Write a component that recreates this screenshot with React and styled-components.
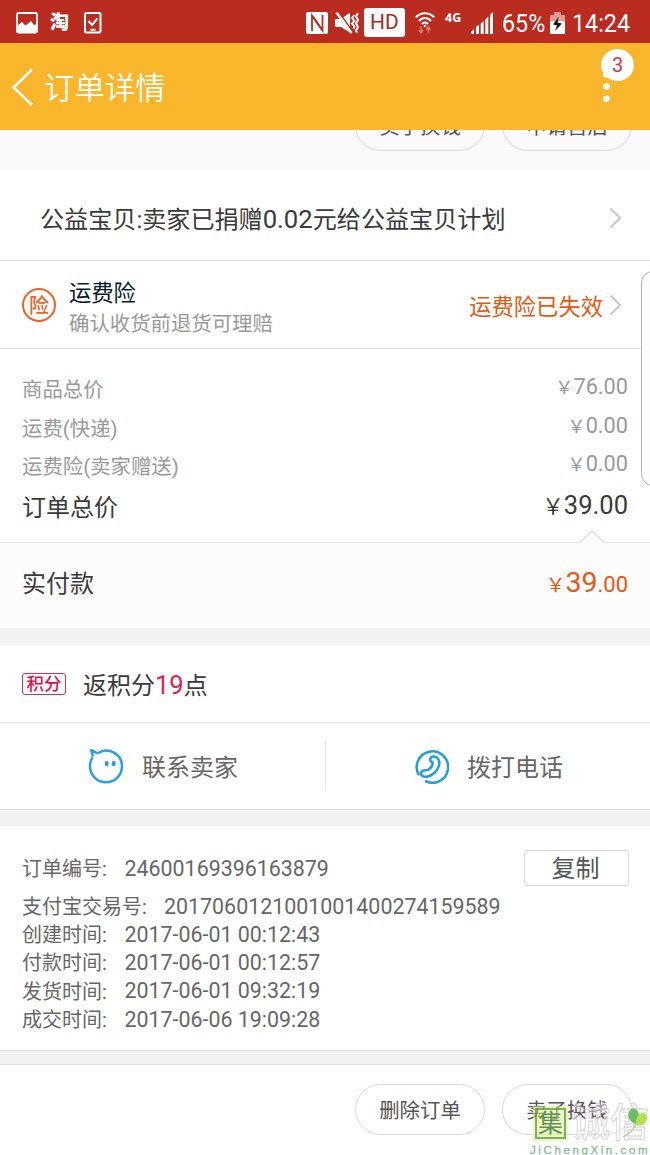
import React from 'react'
import styled, { createGlobalStyle } from 'styled-components'

const GlobalStyle = createGlobalStyle`
    * {
        box-sizing: border-box;
    }
    body {
        margin: 0;
        background: #fff;
        font-family: Roboto, 'Noto Sans CJK SC', sans-serif;
        color: #3a3a3a;
    }
`

const Page = styled.div`
    position: relative;
    width: 650px;
    height: 1155px;
    overflow: hidden;
    display: flex;
    flex-direction: column;
    white-space: nowrap;
`

const StatusBar = styled.div`
    height: 43px;
    flex: none;
    display: flex;
    align-items: center;
    justify-content: space-between;
    padding: 2px 16px 0 16px;
    background: #ba2c1f;
    color: #fff;
`

const StatusGroup = styled.div`
    display: flex;
    align-items: center;
`

const StatusIcon = styled.svg`
    display: block;
    flex: none;
    margin-right: ${({ $gap }) => $gap || 0}px;
`

const TaoMark = styled.div`
    width: 20px;
    margin-right: 14px;
    font-size: 19px;
    line-height: 22px;
    font-weight: 900;
`

const HdTag = styled.div`
    width: 41px;
    height: 29px;
    margin-right: 10px;
    border-radius: 3px;
    background: #fff;
    color: #a82b20;
    font-size: 21px;
    line-height: 29px;
    text-align: center;
`

const NetworkType = styled.div`
    width: 18px;
    height: 24px;
    margin-right: 8px;
    font: bold 12.5px/14px 'Open Sans', sans-serif;
`

const StatusText = styled.div`
    width: ${({ $width }) => $width}px;
    margin-right: ${({ $gap }) => $gap || 0}px;
    font-size: 26.5px;
    line-height: 30px;
    transform: scaleX(0.88);
    transform-origin: left;
`

const Header = styled.div`
    position: relative;
    height: 87px;
    flex: none;
    display: flex;
    align-items: center;
    padding: 1px 0 0 11px;
    background: #f8b62d;
    color: #fff;
`

const Title = styled.div`
    margin-left: 10px;
    padding-top: 4px;
    font-size: 30.4px;
    line-height: 40px;
    font-weight: 350;
`

const MoreDots = styled.svg`
    position: absolute;
    left: 600px;
    top: 26px;
`

const Badge = styled.div`
    position: absolute;
    left: 601px;
    top: 6px;
    width: 33px;
    height: 32px;
    border-radius: 50%;
    background: #fff;
    color: #cc3a36;
    font-size: 20px;
    line-height: 33px;
    text-align: center;
`

const ActionStrip = styled.div`
    height: 40px;
    flex: none;
    overflow: hidden;
    display: flex;
    justify-content: flex-end;
    align-items: flex-end;
    gap: 17px;
    padding: 0 18px 19px 0;
    background: #fafafa;
`

const PillButton = styled.button`
    flex: none;
    width: 130px;
    height: 51px;
    padding: 3px 0 0;
    border: 1px solid #d9d9d9;
    border-radius: 26px;
    background: transparent;
    font-family: inherit;
    font-size: 20.4px;
    line-height: 46px;
    color: #555;
`

const Row = styled.div`
    height: ${({ $height }) => $height}px;
    flex: none;
    display: flex;
    align-items: center;
    border-bottom: 1px solid #e2e2e2;
    padding: ${({ $top }) => $top || 0}px 28px 0 ${({ $left }) => $left || 22}px;
`

// digits are set a little larger than the Chinese text beside them
const Digits = styled.span`
    font-size: 1.065em;
`

const CharityText = styled.div`
    flex: 1;
    padding-top: 2px;
    font-size: 24.1px;
    line-height: 32px;
`

const InsuranceIcon = styled.div`
    width: 34px;
    height: 34px;
    margin-right: 13px;
    border: 2px solid #e8652b;
    border-radius: 50%;
    color: #e8652b;
    font-size: 20px;
    line-height: 32px;
    font-weight: 500;
    text-align: center;
`

const InsuranceText = styled.div`
    flex: 1;
    padding-top: 8px;
`

const InsuranceName = styled.div`
    font-size: 22.3px;
    line-height: 31px;
    color: #051b28;
`

const InsuranceNote = styled.div`
    font-size: 20.4px;
    line-height: 31px;
    color: #999;
`

const InsuranceState = styled.div`
    margin-right: 6px;
    padding-top: 4px;
    font-size: 22.3px;
    line-height: 32px;
    color: #e8570f;
`

const Prices = styled.div`
    position: relative;
    height: 194px;
    flex: none;
    padding: 21px 22px 0;
    border-bottom: 1px solid #e2e2e2;
`

const PriceLine = styled.div`
    display: flex;
    justify-content: space-between;
    height: ${({ $total }) => ($total ? 44 : 38.5)}px;
    line-height: ${({ $total }) => ($total ? 44 : 40)}px;
    font-size: ${({ $total }) => ($total ? 24 : 20.4)}px;
    color: ${({ $total }) => ($total ? '#3a3a3a' : '#999')};
`

const Amount = styled.div`
    margin-top: -3px;
`

const YuanSign = styled.span`
    font-size: 0.9em;
`

const Notch = styled.svg`
    position: absolute;
    left: 579px;
    bottom: -2px;
`

const Paid = styled.div`
    height: 85px;
    flex: none;
    display: flex;
    justify-content: space-between;
    align-items: center;
    padding: 0 22px 8px;
    background: #fcfcfc;
    font-size: 24px;
`

const PaidAmount = styled.div`
    display: flex;
    align-items: baseline;
    padding-top: 2px;
    font-size: 22px;
    color: #e8570f;
`

const PaidYuan = styled.span`
    font-size: 28.5px;
`

const Gap = styled.div`
    height: ${({ $height }) => $height}px;
    flex: none;
    background: #f2f2f2;
`

const PointsTag = styled.div`
    width: 44px;
    height: 22px;
    margin-right: 17px;
    border: 1px solid #d92a5c;
    border-radius: 3px;
    color: #d9114a;
    font-size: 17.5px;
    line-height: 21px;
    font-weight: 500;
    text-align: center;
`

const PointsText = styled.div`
    font-size: 24px;
    line-height: 32px;
    padding-top: 4px;
`

const PointsValue = styled(Digits)`
    color: #e0214f;
`

const Contacts = styled.div`
    height: 87px;
    flex: none;
    display: flex;
    align-items: center;
    border-bottom: 1px solid #e2e2e2;
`

const Contact = styled.div`
    flex: 1;
    height: 50px;
    display: flex;
    align-items: center;
    padding: 0 0 2px 88px;
    font-size: 24px;
    color: #666;

    & + & {
        border-left: 1px solid #e6e6e6;
        padding-left: 87px;
    }
`

const ContactIcon = styled.svg`
    position: relative;
    top: 1px;
    margin-right: 18px;
`

const OrderInfo = styled.div`
    height: 225px;
    flex: none;
    padding: 23px 22px 0;
    border-bottom: 1px solid #dcdcdc;
    color: #666;
`

const InfoLine = styled.div`
    display: flex;
    align-items: center;
    height: ${({ $height }) => $height || 28.3}px;
    margin-bottom: ${({ $gap }) => $gap || 0}px;
    font-size: 20px;
`

const InfoLabel = styled.div`
    width: ${({ $wide }) => ($wide ? 142 : 102.5)}px;
    padding-bottom: 1px;
`

const InfoValue = styled.div`
    flex: 1;
    font-size: 21.4px;
`

const CopyButton = styled.button`
    width: 105px;
    height: 36px;
    margin-right: -1px;
    padding: 2px 2px 0 0;
    border: 1px solid #d9d9d9;
    border-radius: 3px;
    background: #fff;
    font-family: inherit;
    font-size: 24px;
    line-height: 32px;
    color: #555;
`

const Footer = styled.div`
    flex: 1;
    display: flex;
    justify-content: flex-end;
    gap: 17px;
    padding: 19px 18px 0 0;
    border-top: 1px solid #e2e2e2;
`

const EdgePanel = styled.div`
    position: absolute;
    left: 641px;
    top: 271px;
    width: 24px;
    height: 215px;
    border: 1px solid #b0b0b0;
    border-radius: 12px;
    background: #fcfcfc;
`

const Watermark = styled.div`
    position: absolute;
    left: 530px;
    top: 1105px;
    width: 120px;
`

const WatermarkTop = styled.div`
    display: flex;
    align-items: center;
    height: 36px;
    padding-left: 5px;
`

const Seal = styled.div`
    width: 31px;
    height: 31px;
    border: 2px solid rgba(84, 140, 64, 0.7);
    outline: 2px solid rgba(215, 243, 125, 0.5);
    background: rgba(215, 243, 125, 0.5);
    color: #62905a;
    font-size: 25px;
    line-height: 28px;
    text-align: center;
`

const OutlineText = styled.div`
    margin-left: 5px;
    font-size: 39px;
    line-height: 40px;
    font-weight: 500;
    color: rgba(255, 255, 255, 0.45);
    -webkit-text-stroke: 0.8px #d4ced4;
`

const Leaf = styled.svg`
    position: absolute;
    left: 92px;
    top: 1px;
`

const Site = styled.div`
    margin-top: 2px;
    font: 11.5px/14px 'Liberation Sans', sans-serif;
    letter-spacing: 2.6px;
    color: #82bd8c;
    -webkit-text-stroke: 0.3px #82bd8c;
`

const Chevron = () => (
    <svg width="13" height="22" viewBox="0 0 13 22" fill="none">
        <path d="M1.5 1.5 11 11 1.5 20.5" stroke="#c9c9c9" strokeWidth="2.2" />
    </svg>
)

const Yuan = ({ children }) => (
    <Amount>
        <YuanSign>￥</YuanSign>
        <Digits>{children}</Digits>
    </Amount>
)

const times = [
    ['创建时间:', '2017-06-01 00:12:43'],
    ['付款时间:', '2017-06-01 00:12:57'],
    ['发货时间:', '2017-06-01 09:32:19'],
    ['成交时间:', '2017-06-06 19:09:28'],
]

const Status = () => (
    <StatusBar>
        <StatusGroup>
            <StatusIcon $gap={12} width="22" height="22" viewBox="0 0 22 22">
                <rect x="1" y="1" width="20" height="19.5" rx="1.5" fill="none" stroke="#fff" strokeWidth="1.8" />
                <path d="M1 14l5-4 3.500 3.500L15 9l3 4 3-1v8.500H1z" fill="#fff" />
            </StatusIcon>
            <TaoMark>淘</TaoMark>
            <StatusIcon width="18" height="22" viewBox="0 0 18 22" fill="none" stroke="#fff" strokeWidth="2">
                <rect x="1" y="1" width="15.5" height="19.5" rx="1.5" />
                <path d="m4.500 9 3.500 4 5.500-6.500M6.500 17.700h5" />
            </StatusIcon>
        </StatusGroup>
        <StatusGroup>
            <StatusIcon $gap={7} width="22" height="22" viewBox="0 0 22 22">
                <rect width="22" height="22" rx="2" fill="#fff" />
                <path d="M6 19V3.500L15.500 17" fill="none" stroke="#ba2c1f" strokeWidth="1.800" />
                <path d="M7 4.500 16.500 18.500V3" fill="none" stroke="#ba2c1f" strokeWidth="1.800" />
            </StatusIcon>
            <StatusIcon $gap={5} width="24" height="22" viewBox="0 0 24 22">
                <path d="M0 7h6l9-6.500V20.500L6 15H0z" fill="#fff" />
                <path d="m3.500 0 14 19" stroke="#ba2c1f" strokeWidth="1.500" />
                <path d="m1.500 .5 15 20.500" stroke="#fff" strokeWidth="2.500" />
                <path d="m19.500 3-2.500 3 2.500 3-2.500 2.500 2.500 3-1 2.500M23 1l-2 3.500 2 3.500-2 3.500 2 3.500-2 3.500 1 2.500" fill="none" stroke="#fff" strokeWidth="1.900" />
            </StatusIcon>
            <HdTag>HD</HdTag>
            <StatusIcon $gap={10} width="20" height="22" viewBox="0 0 20 22" fill="none" stroke="#fff" strokeWidth="2">
                <path d="M.8 5.500C5.500-.2 14.500-.2 19.200 5.500M4 9c3.300-4 8.700-4 12 0M7 12c1.700-2 4.300-2 6 0" />
                <circle cx="10" cy="14" r="1.300" fill="#fff" stroke="none" />
                <path d="M6 14.500v6M3.800 18 6 20.800 8.200 18M13.500 21v-6M11.300 17.800l2.200-2.800 2.200 2.800" stroke="#e47a70" strokeWidth="1.400" />
            </StatusIcon>
            <NetworkType>4G</NetworkType>
            <StatusIcon $gap={9} width="22" height="22" viewBox="0 0 22 22" fill="#fff">
                <path d="M0 22v-2l3-3v5zM5 22v-7l3-2.500V22zM9.700 22V11.500l3-2.500v13zM14.300 22V7.500l3-3V22zM19 22V3l3-3v22z" />
            </StatusIcon>
            <StatusText $width={43} $gap={5}>65%</StatusText>
            <StatusIcon $gap={7} width="15" height="22" viewBox="0 0 15 22">
                <path d="M4 0h7v3h4v8H0V3h4z" fill="#e19a93" />
                <path d="M0 9h15v13H0z" fill="#fff" />
                <path d="M8.500 5 3 12.500l4 .8L5 19l7-7.500-4.300-.7z" fill="#16100f" />
            </StatusIcon>
            <StatusText $width={62}>14:24</StatusText>
        </StatusGroup>
    </StatusBar>
)

const App = () => {
    return (
        <Page>
            <GlobalStyle />
            <Status />
            <Header>
                <svg width="23" height="38" viewBox="0 0 23 38" fill="none">
                    <path d="M21 1.500 2.500 19.500 21 37" stroke="#fff" strokeWidth="2.500" />
                </svg>
                <Title>订单详情</Title>
                <MoreDots width="14" height="36" viewBox="0 0 14 36" fill="#fff">
                    <circle cx="6.500" cy="5.500" r="3.300" />
                    <circle cx="6.500" cy="17.500" r="3.300" />
                    <circle cx="6.500" cy="29.700" r="3.300" />
                </MoreDots>
                <Badge>3</Badge>
            </Header>

            <ActionStrip>
                <PillButton>卖了换钱</PillButton>
                <PillButton>申请售后</PillButton>
            </ActionStrip>

            <Row $height={91} $left={40} $top={6}>
                <CharityText>
                    公益宝贝:卖家已捐赠<Digits>0.02</Digits>元给公益宝贝计划
                </CharityText>
                <Chevron />
            </Row>
            <Row $height={88}>
                <InsuranceIcon>险</InsuranceIcon>
                <InsuranceText>
                    <InsuranceName>运费险</InsuranceName>
                    <InsuranceNote>确认收货前退货可理赔</InsuranceNote>
                </InsuranceText>
                <InsuranceState>运费险已失效</InsuranceState>
                <Chevron />
            </Row>

            <Prices>
                <PriceLine>
                    商品总价<Yuan>76.00</Yuan>
                </PriceLine>
                <PriceLine>
                    运费(快递)<Yuan>0.00</Yuan>
                </PriceLine>
                <PriceLine>
                    运费险(卖家赠送)<Yuan>0.00</Yuan>
                </PriceLine>
                <PriceLine $total>
                    订单总价<Yuan>39.00</Yuan>
                </PriceLine>
                <Notch width="26" height="14" viewBox="0 0 26 14">
                    <path d="M1 12.500 13 1l12 11.500V14H1z" fill="#fcfcfc" />
                    <path d="M1 12.500 13 1l12 11.500" fill="none" stroke="#dcdcdc" strokeWidth="1.300" />
                </Notch>
            </Prices>
            <Paid>
                实付款
                <PaidAmount>
                    <YuanSign>￥</YuanSign>
                    <PaidYuan>39</PaidYuan>
                    <span>.00</span>
                </PaidAmount>
            </Paid>
            <Gap $height={17} />

            <Row $height={78}>
                <PointsTag>积分</PointsTag>
                <PointsText>
                    返积分<PointsValue>19</PointsValue>点
                </PointsText>
            </Row>
            <Contacts>
                <Contact>
                    <ContactIcon width="36" height="36" viewBox="0 0 36 36" fill="none" stroke="#2b9fe6" strokeWidth="2.500">
                        <path d="M9.500 5.300C20.500-1.500 34 6 34 18.300a16 16 0 0 1-32 0c0-4 .8-6.500 2.600-9.200M5 8.500 3.200 2.200l6.300 3.100" strokeLinejoin="round" />
                        <ellipse cx="18.700" cy="15.500" rx="1.900" ry="2.700" fill="#2b9fe6" stroke="none" />
                        <ellipse cx="25.700" cy="15.500" rx="1.900" ry="2.700" fill="#2b9fe6" stroke="none" />
                    </ContactIcon>
                    联系卖家
                </Contact>
                <Contact>
                    <ContactIcon width="36" height="36" viewBox="0 0 36 36" fill="none" stroke="#219fdb" strokeWidth="2.500">
                        <path d="M6 27.200A15.700 15.700 0 1 1 12 32.900" />
                        <path d="M19.500 14.200C16.300 13.300 16.500 9.300 20 8.500c4.500-.8 7.300 4.200 6 9C24.600 22.800 19.500 27.800 14 28.700c-4.700.7-7-2.200-5.500-4.700 1.700-3 4.800-.8 6.700-2.200 3.300-2.300 5-4.500 4.300-7.600z" />
                    </ContactIcon>
                    拨打电话
                </Contact>
            </Contacts>
            <Gap $height={16} />

            <OrderInfo>
                <InfoLine $height={38}>
                    <InfoLabel>订单编号:</InfoLabel>
                    <InfoValue>24600169396163879</InfoValue>
                    <CopyButton>复制</CopyButton>
                </InfoLine>
                <InfoLine $height={38} $gap={-5}>
                    <InfoLabel $wide>支付宝交易号:</InfoLabel>
                    <InfoValue>2017060121001001400274159589</InfoValue>
                </InfoLine>
                {times.map(([label, value]) => (
                    <InfoLine key={label}>
                        <InfoLabel>{label}</InfoLabel>
                        <InfoValue>{value}</InfoValue>
                    </InfoLine>
                ))}
            </OrderInfo>
            <Gap $height={13} />

            <Footer>
                <PillButton>删除订单</PillButton>
                <PillButton>卖了换钱</PillButton>
            </Footer>

            <EdgePanel />
            <Watermark>
                <WatermarkTop>
                    <Seal>集</Seal>
                    <OutlineText>诚信</OutlineText>
                </WatermarkTop>
                <Leaf width="26" height="32" viewBox="0 0 26 32">
                    <path d="M12 2.500c6 2 6 9 3 15.500C9 17 4 11 7 5.500 8 3.500 10 2 12 2.500z" fill="#6fba67" />
                    <path d="M14 19c-1-7 3-13 8-12 4 1 4 7 1 10-2 2-5 3-9 2z" fill="#b5e04f" />
                    <path d="M14 18C12 23 7 28 1 31" fill="none" stroke="#a9cfa2" strokeWidth="1.300" />
                </Leaf>
                <Site>JiChengXin.com</Site>
            </Watermark>
        </Page>
    )
}

export default App
